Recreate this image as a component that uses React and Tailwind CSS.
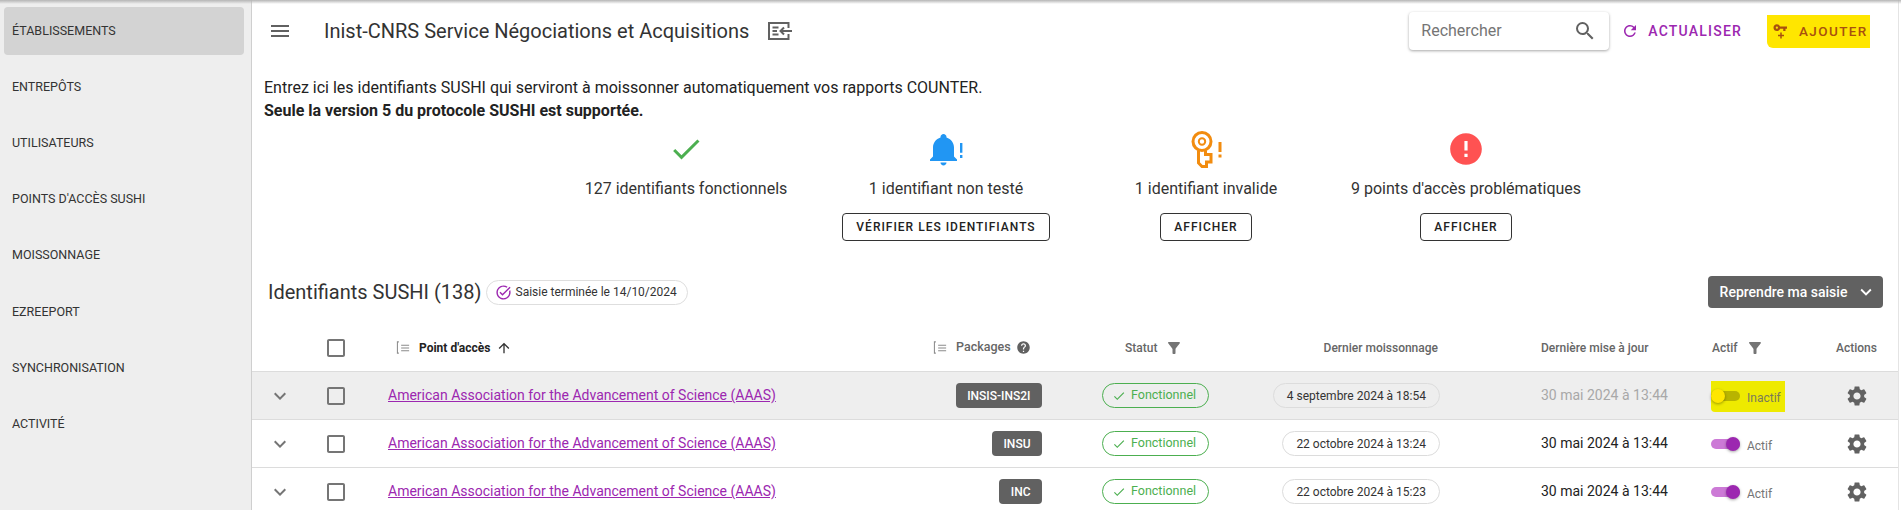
import React from 'react';
import {
  MdMenu, MdSearch, MdRefresh, MdCheck, MdError, MdFilterAlt,
  MdHelp, MdSettings, MdExpandMore, MdArrowUpward, MdCheckBoxOutlineBlank, MdOutlineTaskAlt,
  MdKeyboardArrowDown,
} from 'react-icons/md';

const navItems = ['Établissements', 'Entrepôts', 'Utilisateurs', "Points d'accès SUSHI", 'Moissonnage', 'ezREEPORT', 'Synchronisation', 'Activité'];

const rows = [
  { pkg: 'INSIS-INS2I', date: '4 septembre 2024 à 18:54', active: false },
  { pkg: 'INSU', date: '22 octobre 2024 à 13:24', active: true },
  { pkg: 'INC', date: '22 octobre 2024 à 15:23', active: true },
];

// colonnes du tableau, partagées par l'en-tête et les lignes
const gridCols = 'grid grid-cols-[56px_56px_566px_112px_226px_172px_271px_125px_1fr] items-center';

function KeyPlus({ className }) {
  return (
    <svg viewBox="0 0 24 24" className={className} fill="currentColor">
      <path d="M6.5,3C8.46,3 10.13,4.25 10.74,6H20V9H18V12H15V9H10.74C10.13,10.75 8.46,12 6.5,12C4,12 2,10 2,7.5C2,5 4,3 6.5,3M6.5,6A1.5,1.5 0 0,0 5,7.5A1.5,1.5 0 0,0 6.5,9A1.5,1.5 0 0,0 8,7.5A1.5,1.5 0 0,0 6.5,6M8,17H11V14H13V17H16V19H13V22H11V19H8V17Z" />
    </svg>
  );
}

function BellAlert({ className }) {
  return (
    <svg viewBox="0 0 22 24" className={className} fill="currentColor">
      <path d="M7 21H11C11 22.1 10.1 23 9 23S7 22.1 7 21M18 19V20H0V19L2 17V11C2 7.9 4 5.2 7 4.3V4C7 2.9 7.9 2 9 2S11 2.9 11 4V4.3C14 5.2 16 7.9 16 11V17L18 19Z" />
      <path d="M20 8H21.6V14.5H20ZM20 16H21.6V18H20Z" />
    </svg>
  );
}

function KeyAlert({ className }) {
  return (
    <svg viewBox="0 0 31 37" className={className} fill="none" stroke="currentColor">
      <circle cx="11" cy="10.5" r="9" strokeWidth="3" />
      <circle cx="11" cy="10.5" r="3.2" strokeWidth="2" />
      <path d="M7.5 19.5V32L11 35.5H15.5V31H20V23.5H14.5V19.5" strokeWidth="3" strokeLinejoin="miter" />
      <path d="M29 11V21M29 23.5V26.5" strokeWidth="3" />
    </svg>
  );
}

function TitleIcon({ className }) {
  return (
    <svg viewBox="0 0 24 18" className={className} fill="none" stroke="currentColor" strokeWidth="2">
      <path d="M20.5 6V1H1V17H20.5V12" />
      <path d="M4.5 5.5H10.5M4.5 9H9M4.5 12.5H10.5" />
      <path d="M24 9H12.5M16 5.5L12.5 9L16 12.5" />
    </svg>
  );
}

function SortIcon() {
  return (
    <svg viewBox="0 0 16 16" className="w-[15px] h-[15px] text-[#8a8a8a] shrink-0" fill="none" stroke="currentColor" strokeWidth="1.1">
      <path d="M3 2H1.5V14H3M5.5 5.5H14M5.5 8.5H14M5.5 11.5H14" />
    </svg>
  );
}

function Switch({ active }) {
  return (
    <span className="relative inline-block w-[29px] h-[10px] shrink-0">
      <span className={`absolute inset-0 rounded-full ${active ? 'bg-[#cc7ad6]' : 'bg-[#b8b400]'}`}></span>
      <span className={`absolute top-[-2px] w-[14px] h-[14px] rounded-full shadow-[0_1px_3px_rgba(0,0,0,0.35)] ${active ? 'right-0 bg-[#9c27b0]' : 'left-0 bg-[#ffe600]'}`}></span>
    </span>
  );
}

function OutlineButton({ children }) {
  return (
    <button className="h-[28px] px-[13px] rounded-[4px] border border-[#333] text-[12px] font-medium tracking-[1px] uppercase text-[#222] whitespace-nowrap">
      {children}
    </button>
  );
}

function Stat({ icon, label, action }) {
  return (
    <div className="flex flex-col items-center">
      <div className="h-[40px] flex items-center justify-center">{icon}</div>
      <div className="mt-[10px] text-[16px] leading-[20px] text-[#333]">{label}</div>
      {action && <div className="mt-[14px]"><OutlineButton>{action}</OutlineButton></div>}
    </div>
  );
}

function Row({ row }) {
  const { pkg, date, active } = row;
  return (
    <div className={`${gridCols} h-[48px] border-b border-[#dcdcdc] ${active ? 'bg-white' : 'bg-[#eeeeee]'}`}>
      <MdExpandMore className="justify-self-center w-[24px] h-[24px] text-[#757575]" />
      <MdCheckBoxOutlineBlank className="justify-self-center w-[24px] h-[24px] text-[#757575]" />
      <a className="ml-[24px] text-[14px] text-[#9c27b0] underline whitespace-nowrap">American Association for the Advancement of Science (AAAS)</a>
      <span className="justify-self-end h-[25px] px-[11.5px] rounded-[4px] bg-[#616161] text-white text-[12px] font-medium flex items-center">{pkg}</span>
      <span className="ml-[60px] justify-self-start h-[25px] w-[107px] rounded-full border border-[#4caf50] text-[#4caf50] text-[12.5px] flex items-center gap-[5px] pl-[9px]">
        <MdCheck className="w-[14px] h-[14px]" />
        Fonctionnel
      </span>
      <span className="justify-self-end h-[25px] px-[13px] rounded-full border border-[#dcdcdc] text-[12px] text-[#333] flex items-center whitespace-nowrap">{date}</span>
      <span className={`pl-[101px] text-[14px] whitespace-nowrap ${active ? 'text-[#222]' : 'text-[#a8a8a8]'}`}>30 mai 2024 à 13:44</span>
      <div>
        <span className={`inline-flex items-center h-[31px] gap-[7px] mt-[1px] pr-[4px] ${active ? '' : 'bg-[#eeea00] rounded-bl-[4px]'}`}>
          <Switch active={active} />
          <span className={`text-[12px] mt-[3px] ${active ? 'text-[#757575]' : 'text-[#7a7a5a]'}`}>{active ? 'Actif' : 'Inactif'}</span>
        </span>
      </div>
      <MdSettings className="w-[24px] h-[24px] text-[#616161] ml-[9px]" />
    </div>
  );
}

export default function App() {
  return (
    <div className="relative h-[510px] w-[1901px] overflow-hidden flex bg-white font-['Roboto',sans-serif] text-[#222]">
      {/* ombre de la barre du navigateur */}
      <div className="absolute top-0 left-0 right-0 h-[4px] bg-gradient-to-b from-[#b5b5b5] to-transparent z-10"></div>

      <aside className="w-[252px] shrink-0 bg-[#eeeeee] border-r border-[#cfcfcf] pt-[7px] pl-[4px] pr-[7px]">
        {navItems.map((item, i) => (
          <div key={item} className={`h-[48px] mb-[8.2px] flex items-center pl-[8px] rounded-[4px] text-[12.5px] uppercase text-[#333] ${i === 0 ? 'bg-[#d3d3d3]' : ''}`}>{item}</div>
        ))}
      </aside>

      <main className="flex-1 min-w-0 mr-[2px] border-r border-[#e4e4e4]">
        <header className="h-[62px] flex items-center">
          <MdMenu className="ml-[16px] w-[24px] h-[24px] text-[#616161]" />
          <h1 className="ml-[32px] text-[20px] font-normal text-[#333]">Inist-CNRS Service Négociations et Acquisitions</h1>
          <TitleIcon className="ml-[19px] w-[24px] h-[18px] text-[#616161]" />
          <div className="ml-auto flex items-center">
            <div className="w-[200px] h-[38px] rounded-[4px] bg-white shadow-[0_1px_3px_rgba(0,0,0,0.35)] flex items-center justify-between pl-[12px] pr-[12px]">
              <span className="text-[16px] text-[#757575]">Rechercher</span>
              <MdSearch className="w-[24px] h-[24px] text-[#616161]" />
            </div>
            <button className="ml-[12px] flex items-center text-[#9c27b0] text-[14px] font-medium tracking-[1.2px]">
              <MdRefresh className="w-[18px] h-[18px] mr-[9px]" />
              ACTUALISER
            </button>
            <button className="ml-[25px] mr-[28px] w-[103px] h-[33px] bg-[#ffe600] rounded-bl-[6px] flex items-center pl-[5px] text-[#a8500f] text-[13.5px] font-medium tracking-[1.4px]">
              <KeyPlus className="w-[18px] h-[18px] mr-[9px]" />
              AJOUTER
            </button>
          </div>
        </header>

        <div className="pt-[14px] pl-[12px] text-[16px] leading-[23px] text-[#222]">
          <p>Entrez ici les identifiants SUSHI qui serviront à moissonner automatiquement vos rapports COUNTER.</p>
          <p className="font-bold">Seule la version 5 du protocole SUSHI est supportée.</p>
        </div>

        <div className="mt-[7px] h-[112px] flex justify-center">
          <div className="grid grid-cols-[260px_260px_260px_260px] ml-[2px]">
            <Stat icon={<MdCheck className="w-[36px] h-[36px] text-[#4caf50]" />} label="127 identifiants fonctionnels" />
            <Stat icon={<BellAlert className="w-[33px] h-[36px] text-[#2196f3]" />} label="1 identifiant non testé" action="Vérifier les identifiants" />
            <Stat icon={<KeyAlert className="w-[31px] h-[37px] text-[#f28c0f]" />} label="1 identifiant invalide" action="Afficher" />
            <Stat icon={<MdError className="w-[38px] h-[38px] text-[#ff5252]" />} label="9 points d'accès problématiques" action="Afficher" />
          </div>
        </div>

        <div className="mt-[35px] h-[32px] flex items-center pl-[16px] pr-[15px]">
          <h2 className="text-[20px] font-normal text-[#333]">Identifiants SUSHI (138)</h2>
          <span className="ml-[4px] h-[25px] pl-[8px] pr-[10px] rounded-full border border-[#dedede] flex items-center gap-[4px] text-[12px] text-[#333]">
            <MdOutlineTaskAlt className="w-[17px] h-[17px] text-[#9c27b0]" />
            Saisie terminée le 14/10/2024
          </span>
          <button className="ml-auto w-[175px] h-[32px] pl-[6px] rounded-[4px] bg-[#616161] text-white text-[14px] font-medium flex items-center justify-center gap-[8px]">
            Reprendre ma saisie
            <MdKeyboardArrowDown className="w-[22px] h-[22px]" />
          </button>
        </div>

        <div className={`${gridCols} mt-[16px] h-[48px] border-b border-[#dcdcdc] text-[12px] font-medium text-[#666]`}>
          <span></span>
          <MdCheckBoxOutlineBlank className="justify-self-center w-[24px] h-[24px] text-[#757575]" />
          <div className="ml-[32px] flex items-center gap-[8px] text-[#222]">
            <SortIcon />
            <span className="font-bold">Point d'accès</span>
            <MdArrowUpward className="w-[16px] h-[16px] ml-[-2px] text-[#333]" />
          </div>
          <div className="ml-[3px] flex items-center gap-[8px]">
            <SortIcon />
            <span className="flex items-center gap-[5px] text-[12.5px]">Packages <MdHelp className="w-[15px] h-[15px] text-[#616161]" /></span>
          </div>
          <div className="ml-[83px] flex items-center gap-[8px]">
            Statut
            <MdFilterAlt className="w-[18px] h-[18px] text-[#757575]" />
          </div>
          <span className="justify-self-end mr-[2px]">Dernier moissonnage</span>
          <span className="pl-[101px]">Dernière mise à jour</span>
          <div className="ml-[1px] flex items-center gap-[8px]">
            Actif
            <MdFilterAlt className="w-[18px] h-[18px] text-[#757575]" />
          </div>
          <span>Actions</span>
        </div>

        {rows.map((row) => (
          <Row key={row.pkg} row={row} />
        ))}
      </main>
    </div>
  );
}
